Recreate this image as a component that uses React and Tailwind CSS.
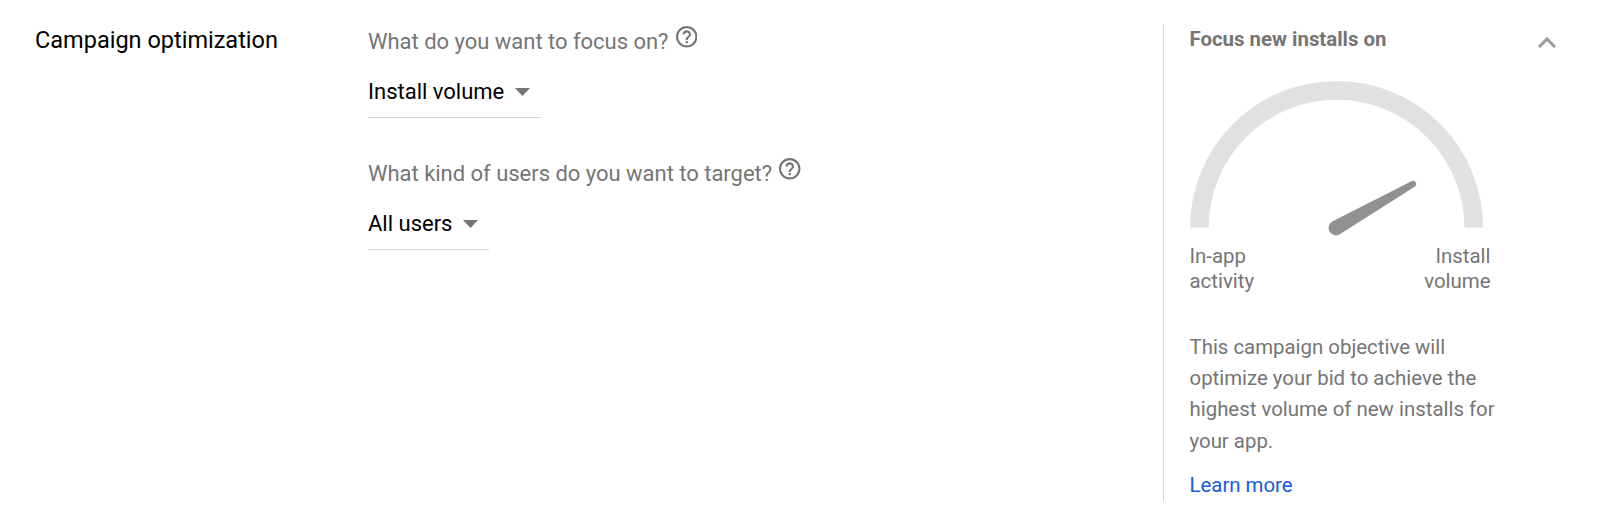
import React from "react";

const questions = [
	{ label: "What do you want to focus on?", value: "Install volume" },
	{ label: "What kind of users do you want to target?", value: "All users" },
];

function HelpIcon() {
	return (
		<svg className="ml-[7px] h-[21.5px] w-[21.5px] shrink-0" viewBox="2 2 20 20" fill="#757575">
			<path d="M11 18h2v-2h-2v2zm1-16C6.48 2 2 6.48 2 12s4.48 10 10 10 10-4.48 10-10S17.52 2 12 2zm0 18c-4.41 0-8-3.59-8-8s3.59-8 8-8 8 3.59 8 8-3.59 8-8 8zm0-14c-2.21 0-4 1.79-4 4h2c0-1.1.9-2 2-2s2 .9 2 2c0 2-3 1.75-3 5h2c0-2.25 3-2.5 3-5 0-2.21-1.79-4-4-4z" />
		</svg>
	);
}

function Question({ label, value }) {
	return (
		<div className="flex h-[132px] flex-col items-start">
			<div className="flex">
				<span className="text-[22px] leading-8 tracking-[-0.02px] text-[#757575]">{label}</span>
				<HelpIcon />
			</div>
			{/* Dropdown */}
			<button className="mt-[18px] flex h-[42px] items-start border-b border-[#d6d6d6] pr-[11px]">
				<span className="text-[22px] leading-8 text-black">{value}</span>
				<svg className="mt-[12px] ml-[11px] h-2 w-[15px]" viewBox="0 0 15 8" fill="#757575">
					<path d="M0 0h15L7.5 8z" />
				</svg>
			</button>
		</div>
	);
}

function Gauge() {
	return (
		<svg className="mt-[25px] block h-[156px] w-[294px]" viewBox="0 0.4 294 156">
			<path d="M9.4 147A137.2 137.2 0 0 1 283.8 147" fill="none" stroke="#e1e1e1" strokeWidth="18.7" />
			{/* Needle */}
			<path d="M143.2 140.4L221.9 100.5A3.2 3.2 0 0 1 225 106L151 153A7.5 7.5 0 1 1 143.2 140.4z" fill="#909291" />
		</svg>
	);
}

function App() {
	return (
		<div className="flex h-[523px] w-full bg-white pt-6 pl-[35px] font-['Roboto',sans-serif]">
			<h2 className="w-[333px] shrink-0 text-[23.5px] leading-8 text-black">Campaign optimization</h2>
			<div className="flex grow flex-col pt-[2px]">
				{questions.map((question) => (
					<Question key={question.label} {...question} />
				))}
			</div>
			{/* Side panel */}
			<aside className="h-[477px] w-[437px] shrink-0 border-l border-[#d6d6d6] pl-[25.5px]">
				<div className="flex h-8 justify-between pr-[44px]">
					<h3 className="-mt-px text-[20.4px] leading-8 font-bold text-[#757575]">Focus new installs on</h3>
					<svg className="mt-[13px] h-[11px] w-[18px]" viewBox="0 0 18 11" fill="none" stroke="#9b9b9b" strokeWidth="3">
						<path d="M1 10L9 2l8 8" />
					</svg>
				</div>
				<Gauge />
				<div className="mt-[7px] flex w-[301px] justify-between text-[20.4px] leading-[25px] text-[#757575]">
					<div>In-app<br />activity</div>
					<div className="text-right">Install<br />volume</div>
				</div>
				<p className="mt-[37.6px] text-[20.4px] leading-[31.4px] text-[#757575]">
					This campaign objective will<br />optimize your bid to achieve the<br />highest volume of new installs for<br />your app.
				</p>
				<a href="#" className="mt-3 block text-[20.4px] leading-8 text-[#1a5ad7]">Learn more</a>
			</aside>
		</div>
	);
}

export default App;
